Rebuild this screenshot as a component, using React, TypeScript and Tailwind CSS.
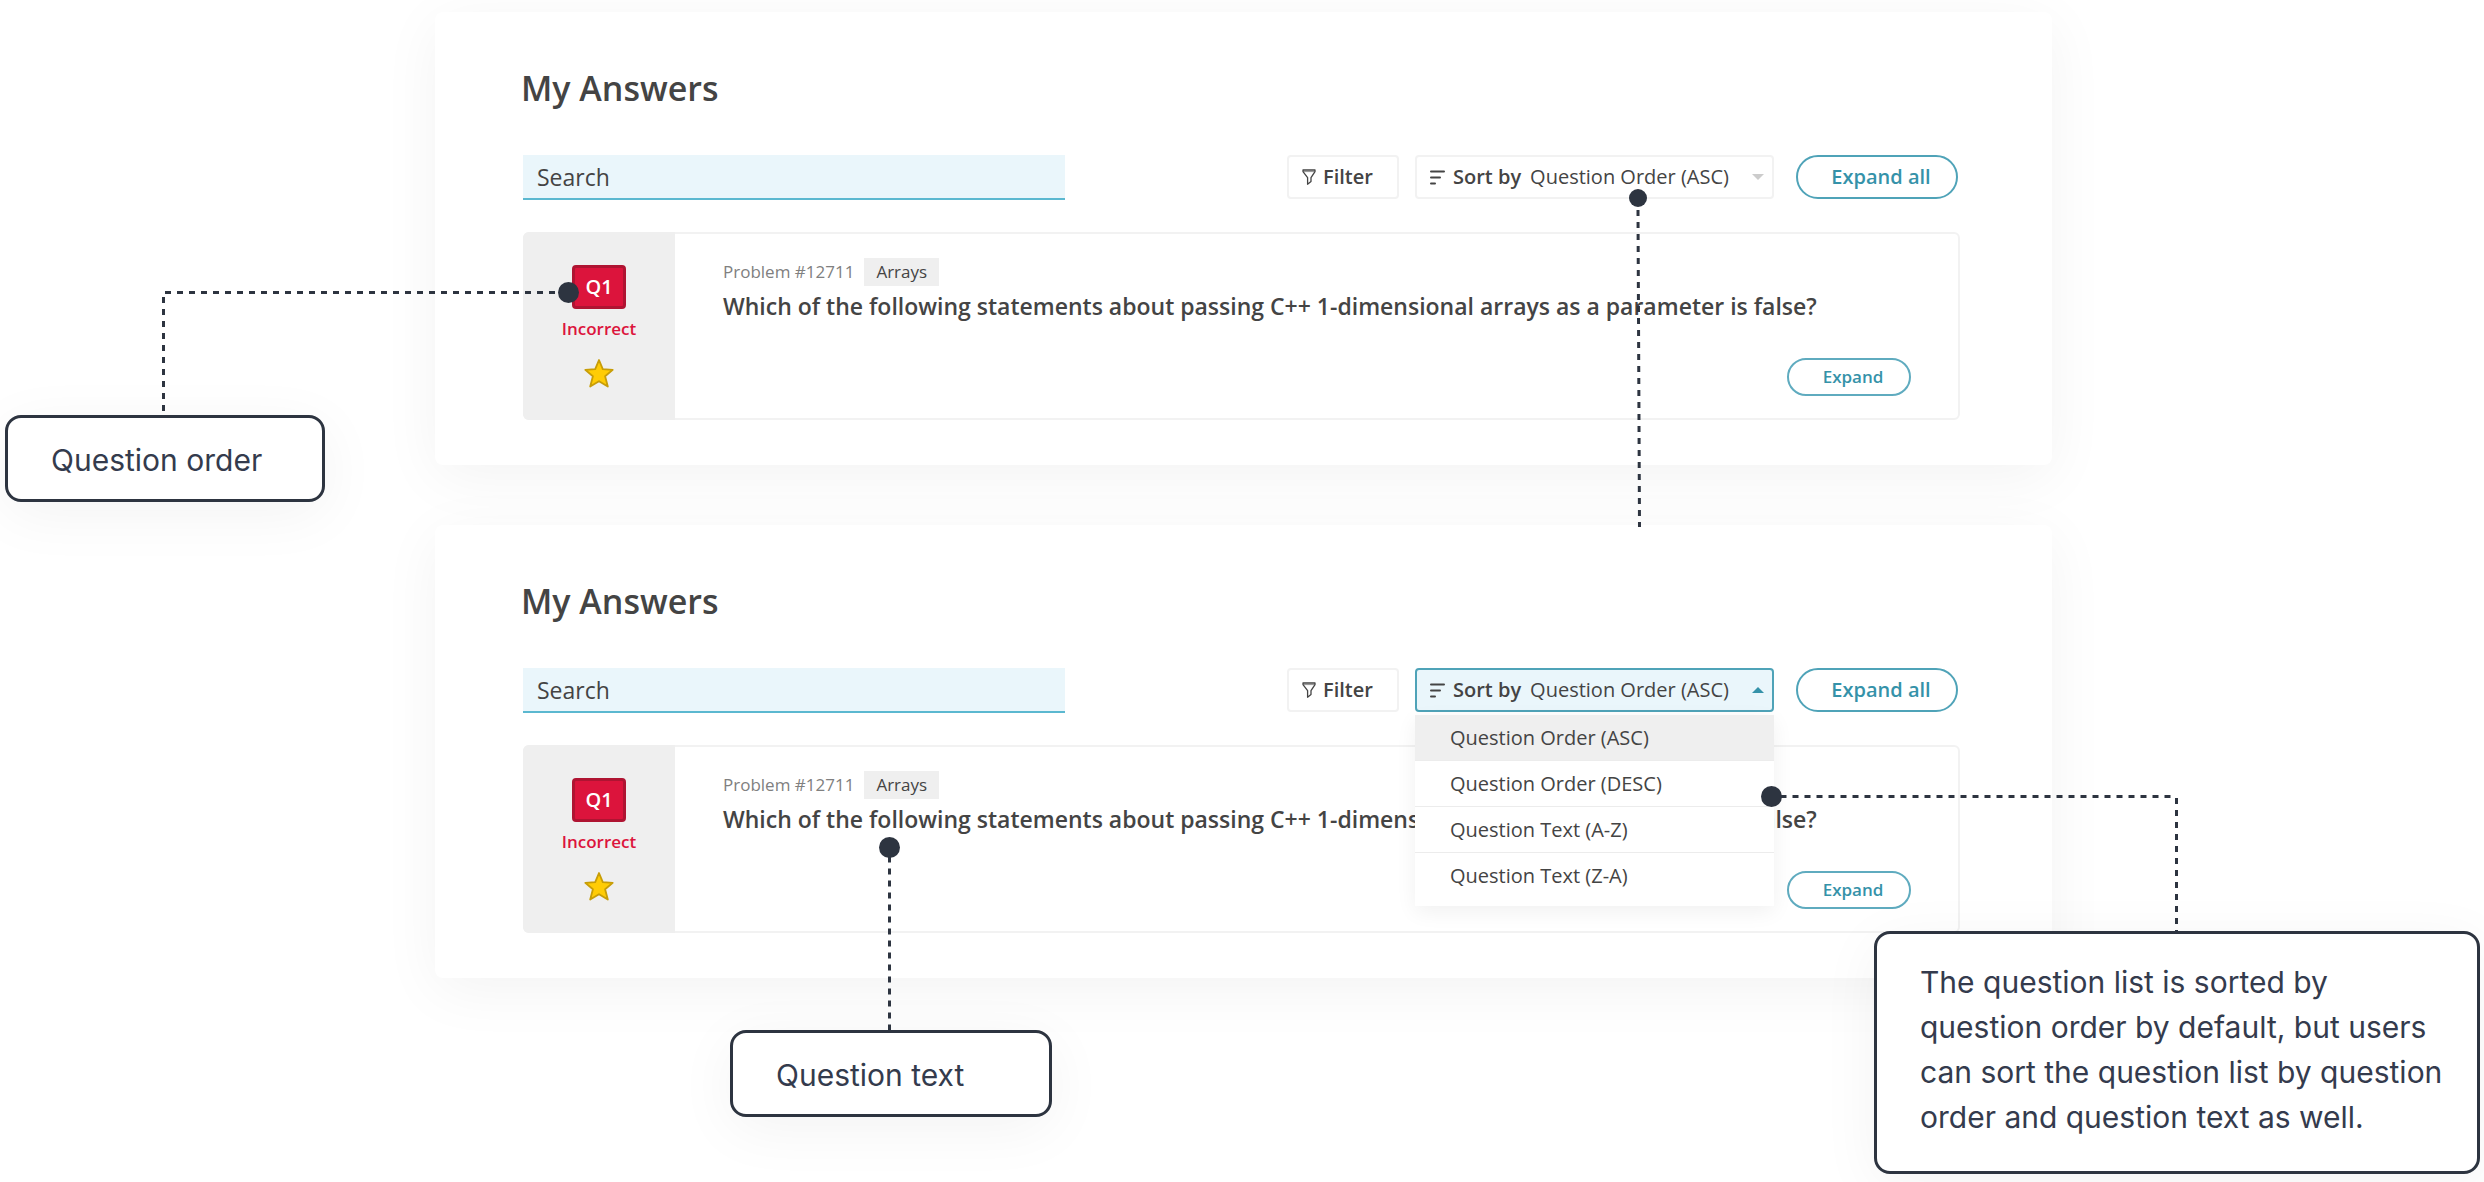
import React, { ReactNode } from "react";

const SORT_OPTIONS = [
  "Question Order (ASC)",
  "Question Order (DESC)",
  "Question Text (A-Z)",
  "Question Text (Z-A)",
];

function FilterIcon() {
  return (
    <svg className="h-4 w-3.5 shrink-0" viewBox="0 0 14 16" fill="none" stroke="#444444" strokeWidth="1.3" strokeLinejoin="round" aria-hidden="true">
      <path d="M1 1H13V2.6L9 8.6V12.6L5.6 15.2V8.6L1 2.6Z" />
      <path d="M1.4 2.6H12.6" strokeWidth="0.6" />
    </svg>
  );
}

function SortIcon() {
  return (
    <svg className="h-[15px] w-[15px] shrink-0" viewBox="0 0 15 15" stroke="#444444" strokeWidth="2" strokeLinecap="round" aria-hidden="true">
      <path d="M1 1.5H14M1 7.5H10M1 13.5H5" />
    </svg>
  );
}

function StarIcon() {
  return (
    <svg className="h-[30px] w-[30px]" viewBox="0 0 30 30" aria-hidden="true">
      <path
        d="M15 2L18.8 11.2L28.7 11.9L21.1 18.3L23.8 28.6L15 23.2L6.2 28.6L8.9 18.3L1.3 11.9L11.2 11.2Z"
        fill="#ffcc05"
        stroke="#c79d08"
        strokeWidth="1.8"
        strokeLinejoin="round"
      />
    </svg>
  );
}

function Caret({ up }: { up?: boolean }) {
  return (
    <svg className="pointer-events-none h-1.5 w-3 shrink-0" viewBox="0 0 12 6" aria-hidden="true">
      {up ? <path d="M0 6H12L6 0Z" fill="#3592a9" /> : <path d="M0 0H12L6 6Z" fill="#cccccc" />}
    </svg>
  );
}

function SortMenu() {
  return (
    <ul
      role="listbox"
      aria-label="Sort options"
      className="absolute top-full -left-0.5 z-10 mt-[5px] w-[359px] bg-white pb-[7px] shadow-[0_6px_20px_rgba(0,0,0,0.06)]"
    >
      {SORT_OPTIONS.map((option, i) => (
        <li
          key={option}
          role="option"
          aria-selected={i === 0}
          className="flex h-[46px] items-center border-b border-[#ececec] pl-[35px] text-xl leading-7 first:bg-[#efefef] last:border-b-0"
        >
          {option}
        </li>
      ))}
    </ul>
  );
}

function SortControl({ id, open }: { id: string; open?: boolean }) {
  return (
    <div
      className={
        open
          ? "relative flex h-11 w-[359px] items-center rounded border-2 border-[#4fa3b8] bg-[#eaf6fb] pr-2 pl-[13px] text-xl leading-7"
          : "relative flex h-11 w-[359px] items-center rounded border-2 border-[#f2f2f2] pr-2 pl-[13px] text-xl leading-7"
      }
    >
      <SortIcon />
      <label htmlFor={id} className="ml-2 font-semibold whitespace-nowrap">
        Sort by
      </label>
      <select id={id} className="ml-[9px] min-w-0 flex-1 appearance-none bg-transparent text-xl leading-7 outline-none">
        {SORT_OPTIONS.map((option) => (
          <option key={option}>{option}</option>
        ))}
      </select>
      <Caret up={open} />
      {open && <SortMenu />}
    </div>
  );
}

function QuestionCard() {
  return (
    <article className="mt-8 flex h-[188px] rounded-md border-2 border-[#f2f2f2]">
      <div className="-my-0.5 -ml-0.5 flex w-[152px] shrink-0 flex-col items-center rounded-l-md bg-[#efefef] pt-[33px]">
        <span className="flex h-11 w-[54px] items-center justify-center rounded border-[3px] border-[#af1432] bg-[#dc143c] text-xl leading-7 font-semibold text-white">
          Q1
        </span>
        <span className="mt-2 text-[17px] leading-6 font-semibold text-[#dc143c]">Incorrect</span>
        <button type="button" aria-label="Favourite" className="mt-[17px]">
          <StarIcon />
        </button>
      </div>
      <div className="flex min-w-0 flex-1 flex-col pt-6 pr-[47px] pb-[22px] pl-12">
        <div className="flex items-center gap-2.5 text-[17px] leading-7">
          <span className="text-[#808080]">Problem #12711</span>
          <span className="bg-[#efefef] px-3">Arrays</span>
        </div>
        <h2 className="mt-1 text-[23px] leading-8 font-semibold whitespace-nowrap">
          Which of the following statements about passing C++ 1-dimensional arrays as a parameter is false?
        </h2>
        <button
          type="button"
          className="mt-auto h-[38px] w-[124px] self-end rounded-full border-2 border-[#5fabbf] pl-2 text-[17px] font-semibold text-[#3592a9]"
        >
          Expand
        </button>
      </div>
    </article>
  );
}

function AnswersPanel({ id, open }: { id: string; open?: boolean }) {
  return (
    <section className="rounded-lg bg-white pt-[52px] pr-[92px] pb-[45px] pl-[86px] shadow-[0_12px_60px_rgba(0,0,0,0.05)]">
      <h1 className="text-[34px] leading-[48px] font-semibold">My Answers</h1>
      <div className="pl-0.5">
        <div className="mt-[43px] flex h-[45px] items-start pr-0.5">
          <input
            type="search"
            aria-label="Search"
            placeholder="Search"
            className="h-[45px] w-[542px] border-b-2 border-[#5bb8d0] bg-[#eaf6fb] px-3.5 text-[23px] text-[#444444] outline-none placeholder:text-[#444444]"
          />
          <button type="button" className="ml-auto flex h-11 w-28 items-center gap-[7px] rounded border-2 border-[#f2f2f2] px-[13px] text-xl leading-7 font-semibold">
            <FilterIcon />
            Filter
          </button>
          <div className="ml-4">
            <SortControl id={id} open={open} />
          </div>
          <button type="button" className="ml-[22px] h-11 w-[162px] rounded-full border-2 border-[#4fa3b8] pl-2 text-xl leading-7 font-semibold text-[#3592a9]">
            Expand all
          </button>
        </div>
        <QuestionCard />
      </div>
    </section>
  );
}

function Callout({ className, children }: { className: string; children: ReactNode }) {
  return (
    <p
      className={`absolute z-20 rounded-2xl border-3 border-[#2d3440] bg-white pl-[43px] font-['Inter',sans-serif] text-[30px] leading-[45px] text-[#343b4d] shadow-[0_12px_60px_rgba(0,0,0,0.05)] ${className}`}
    >
      {children}
    </p>
  );
}

function Connector({ className, viewBox, lines, dot, r = 10.5 }: { className: string; viewBox: string; lines: string[]; dot: [number, number]; r?: number }) {
  return (
    <svg className={`pointer-events-none absolute z-30 ${className}`} viewBox={viewBox} fill="none" aria-hidden="true">
      {lines.map((d) => (
        <path key={d} d={d} stroke="#2d3440" strokeWidth="3" strokeDasharray="6 6" />
      ))}
      <circle cx={dot[0]} cy={dot[1]} r={r} fill="#2d3440" />
    </svg>
  );
}

export default function App() {
  return (
    <main className="relative flex min-h-screen flex-col gap-[60px] overflow-hidden bg-white pt-3 pr-[432px] pb-[204px] pl-[435px] font-['Open_Sans',sans-serif] text-[#444444]">
      <AnswersPanel id="sort-closed" />
      <AnswersPanel id="sort-open" open />

      <Callout className="top-[415px] left-[5px] w-80 pt-5 pb-4">Question order</Callout>
      <Callout className="top-[1030px] left-[730px] w-[322px] pt-5 pb-4">Question text</Callout>
      <Callout className="top-[931px] right-1 w-[606px] pt-[26px] pr-7 pb-[31px]">
        The question list is sorted by question order by default, but users can sort the question list by question order and question text as well.
      </Callout>

      <Connector className="top-[280px] left-[160px] h-[140px] w-[420px]" viewBox="160 280 420 140" lines={["M165 292.5H558", "M163.5 297V412"]} dot={[568.5, 292.5]} />
      <Connector className="top-[188px] right-[834px] h-[340px] w-[30px]" viewBox="1620 188 30 340" lines={["M1638 210L1639.5 527"]} dot={[1638, 198]} r={9} />
      <Connector className="top-[836px] left-[878px] h-[194px] w-6" viewBox="878 836 24 194" lines={["M889.5 856.5V1030"]} dot={[889.5, 847.5]} />
      <Connector className="top-[784px] right-[304px] h-[150px] w-[420px]" viewBox="1760 784 420 150" lines={["M1780.5 796.5H2171", "M2176.5 798V934"]} dot={[1771.5, 796.5]} />
    </main>
  );
}
